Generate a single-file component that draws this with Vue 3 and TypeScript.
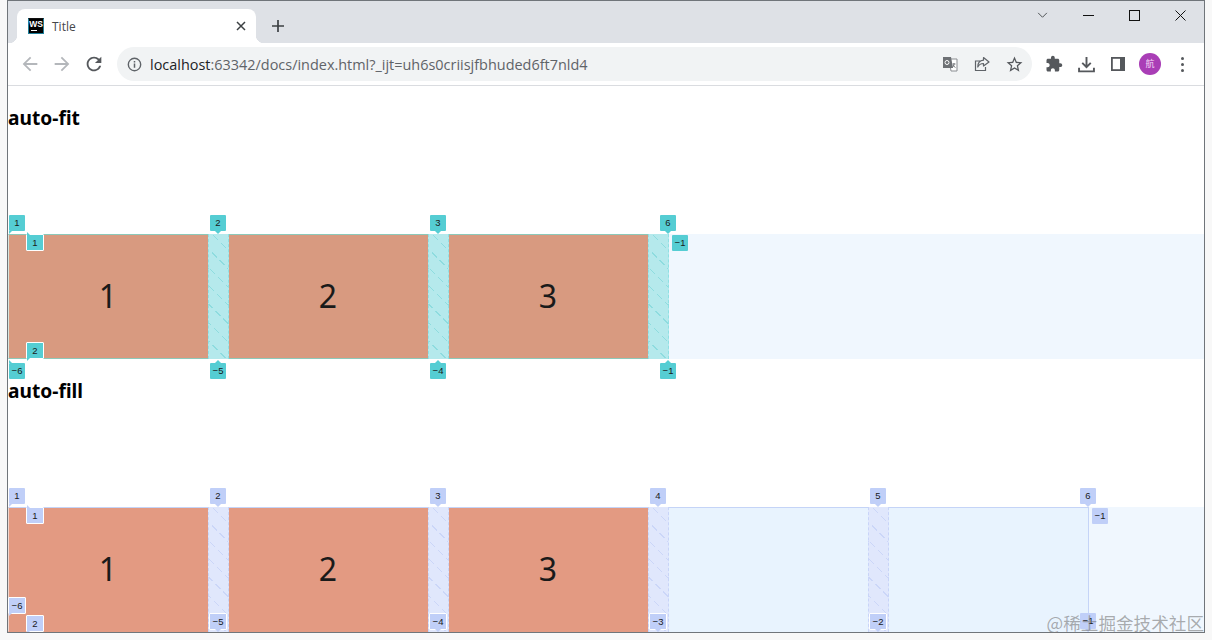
<script setup lang="ts">
interface Badge { x: number; y: number; label: string; arrow: string; ring?: boolean }
interface Section {
  title: string; kind: string; gaps: number[]; extent: number; badges: Badge[]
}

const b = (x: number, y: number, label: string, arrow: string, ring = false): Badge => ({ x, y, label, arrow, ring })

const sections: Section[] = [
  {
    title: 'auto-fit', kind: 'fit', gaps: [200, 420, 640], extent: 661,
    badges: [
      b(1, -19, '1', 'corner-bl'), b(202, -19, '2', 'down'), b(422, -19, '3', 'down'), b(652, -19, '6', 'down'),
      b(18, 0, '1', 'corner-tl', true), b(18, 108, '2', 'corner-bl', true), b(664, 1, '−1', 'none'),
      b(1, 129, '−6', 'corner-tl'), b(202, 129, '−5', 'up'), b(422, 129, '−4', 'up'), b(652, 129, '−1', 'up')
    ]
  },
  {
    title: 'auto-fill', kind: 'fill', gaps: [200, 420, 640, 860], extent: 1081,
    badges: [
      b(1, -19, '1', 'corner-bl'), b(202, -19, '2', 'down'), b(422, -19, '3', 'down'), b(642, -19, '4', 'down'),
      b(862, -19, '5', 'down'), b(1072, -19, '6', 'down'),
      b(18, 0, '1', 'corner-tl', true), b(1084, 1, '−1', 'none'),
      b(0, 90, '−6', 'corner-bl', true), b(18, 108, '2', 'corner-bl', true),
      b(201, 106, '−5', 'down', true), b(421, 106, '−4', 'down', true), b(641, 106, '−3', 'down', true),
      b(861, 106, '−2', 'down', true), b(1072, 106, '−1', 'down')
    ]
  }
]
const cells = ['1', '2', '3']
</script>

<template>
  <div class="screen">
    <div class="window">
      <header class="tabstrip">
        <div class="tab">
          <span class="favicon">WS</span>
          <span class="tab-title">Title</span>
          <svg class="tab-close" viewBox="0 0 10 10" width="10" height="10"><path d="M1 1l8 8M9 1l-8 8" stroke="#3c4043" stroke-width="1.5" fill="none" /></svg>
        </div>
        <svg class="new-tab" viewBox="0 0 12 12" width="12" height="12"><path d="M6 0v12M0 6h12" stroke="#3c4043" stroke-width="1.7" fill="none" /></svg>
        <div class="win-controls">
          <span class="win-btn"><svg viewBox="0 0 12 8" width="11" height="7"><path d="M1 1l5 5 5-5" stroke="#3c4043" stroke-width="1" fill="none" /></svg></span>
          <span class="win-btn"><svg viewBox="0 0 11 11" width="11" height="11"><path d="M0 5.5h11" stroke="#111" stroke-width="1" fill="none" /></svg></span>
          <span class="win-btn"><svg viewBox="0 0 11 11" width="11" height="11"><rect x=".5" y=".5" width="10" height="10" stroke="#111" stroke-width="1" fill="none" /></svg></span>
          <span class="win-btn"><svg viewBox="0 0 11 11" width="11" height="11"><path d="M.5.5l10 10M10.500.5l-10 10" stroke="#111" stroke-width="1" fill="none" /></svg></span>
        </div>
      </header>

      <nav class="toolbar">
        <span class="tool"><svg viewBox="0 0 24 24" width="22" height="22"><path fill="#b4b7bb" d="M20 11H7.830l5.590-5.590L12 4l-8 8 8 8 1.410-1.410L7.830 13H20v-2z" /></svg></span>
        <span class="tool"><svg viewBox="0 0 24 24" width="22" height="22"><path fill="#b4b7bb" d="M12 4l-1.410 1.410L16.170 11H4v2h12.170l-5.580 5.590L12 20l8-8z" /></svg></span>
        <span class="tool"><svg viewBox="0 0 24 24" width="22" height="22"><path fill="#55585c" d="M17.650 6.350A7.958 7.958 0 0 0 12 4c-4.420 0-7.990 3.580-7.990 8s3.570 8 7.990 8c3.730 0 6.840-2.550 7.730-6h-2.080A5.990 5.990 0 0 1 12 18c-3.310 0-6-2.690-6-6s2.690-6 6-6c1.660 0 3.140.690 4.220 1.780L13 11h7V4l-2.350 2.350z" /></svg></span>
        <div class="omnibox">
          <svg class="info" viewBox="0 0 16 16" width="15" height="15"><circle cx="8" cy="8" r="6.600" stroke="#5f6368" stroke-width="1.500" fill="none" /><path d="M7.200 7h1.600v4.500H7.200zM7.200 4.300h1.600v1.600H7.200z" fill="#5f6368" /></svg>
          <span class="url"><span class="host">localhost</span>:63342/docs/index.html?_ijt=uh6s0criisjfbhuded6ft7nld4</span>
          <span class="tool"><svg viewBox="0 0 16 16" width="16" height="16"><path d="M7 3h8v12H9z" fill="#fff" stroke="#8a8d91" stroke-width="1" /><path d="M1 1h8l2 11H1z" fill="#6d7074" /><circle cx="5" cy="6.500" r="2" fill="none" stroke="#fff" stroke-width="1" /><path d="M10.500 8h3M12 7v1c0 2-1 3-2 3.500M11 9c.5 1 1.500 2 2.500 2.500" stroke="#6d7074" stroke-width=".9" fill="none" /></svg></span>
          <span class="tool"><svg viewBox="0 0 16 16" width="16" height="16"><path d="M6 5H1.500v9.500h10V11" stroke="#5f6368" stroke-width="1.200" fill="none" /><path d="M9.500 1.500L15 6l-5.500 4V7.500C7 7.500 5 8.500 3.800 11c0-4 2.200-6.500 5.700-6.800z" stroke="#5f6368" stroke-width="1.200" fill="#f1f3f4" stroke-linejoin="round" /></svg></span>
          <span class="tool"><svg viewBox="0 0 24 24" width="19" height="19"><path fill="#55585c" d="M22 9.240l-7.190-.620L12 2 9.190 8.630 2 9.240l5.460 4.730L5.820 21 12 17.270 18.180 21l-1.630-7.030L22 9.240zM12 15.400l-3.760 2.270 1-4.280-3.320-2.880 4.380-.380L12 6.100l1.710 4.040 4.380.380-3.320 2.880 1 4.280L12 15.400z" /></svg></span>
        </div>
        <div class="actions">
          <span class="tool"><svg viewBox="0 0 24 24" width="18" height="18"><path fill="#55585c" d="M20.500 11H19V7c0-1.100-.9-2-2-2h-4V3.500C13 2.120 11.880 1 10.500 1S8 2.120 8 3.500V5H4c-1.100 0-1.990.9-1.990 2v3.800H3.500c1.490 0 2.700 1.210 2.700 2.700s-1.210 2.700-2.700 2.700H2V20c0 1.100.9 2 2 2h3.800v-1.500c0-1.490 1.210-2.700 2.700-2.700 1.490 0 2.700 1.210 2.700 2.700V22H17c1.100 0 2-.9 2-2v-4h1.500c1.380 0 2.500-1.120 2.500-2.500S21.880 11 20.500 11z" /></svg></span>
          <span class="tool"><svg viewBox="0 0 16 16" width="17" height="17"><path d="M8 1v9M4 6.500L8 10.500l4-4M1 11v3.500h14V11" stroke="#55585c" stroke-width="1.800" fill="none" /></svg></span>
          <span class="tool"><svg viewBox="0 0 14 14" width="14" height="14"><rect x=".9" y=".9" width="12.200" height="12.200" fill="#fff" stroke="#55585c" stroke-width="1.800" /><rect x="9" y="1" width="4" height="12" fill="#55585c" /></svg></span>
          <span class="tool"><span class="avatar">航</span></span>
          <span class="tool"><span class="dots"><i></i><i></i><i></i></span></span>
        </div>
      </nav>

      <main class="page">
        <section v-for="s in sections" :key="s.title" class="section">
          <h3 class="heading">{{ s.title }}</h3>
          <div class="grid" :class="s.kind">
            <div class="extent" :style="{ width: s.extent + 'px' }"></div>
            <div v-for="c in cells" :key="c" class="cell">{{ c }}</div>
            <div class="outline" :style="{ width: s.extent + 'px' }"></div>
            <div v-for="g in s.gaps" :key="g" class="gap" :style="{ left: g + 'px' }"></div>
            <span
              v-for="(t, i) in s.badges"
              :key="i"
              class="badge"
              :class="[t.arrow, { ring: t.ring }]"
              :style="{ left: t.x + 'px', top: t.y + 'px' }"
            >{{ t.label }}</span>
          </div>
        </section>
      </main>
    </div>
    <div class="watermark">@稀土掘金技术社区</div>
  </div>
</template>

<style>
html, body { margin: 0; background: #fafafa; }
</style>

<style scoped>
.screen {
  position: relative;
  width: 1212px;
  height: 640px;
  overflow: hidden;
  background: #f8f8f8;
  font-family: "Open Sans", "Noto Sans", sans-serif;
}
.window {
  box-sizing: border-box;
  width: 1198px;
  height: 633px;
  margin-left: 7px;
  border: 1px solid #70757a;
  background: #fff;
  overflow: hidden;
}
.tabstrip {
  display: flex;
  align-items: flex-end;
  height: 42px;
  background: #dee1e6;
}
.tab {
  position: relative;
  display: flex;
  align-items: center;
  box-sizing: border-box;
  width: 239px;
  height: 34px;
  margin-left: 9px;
  padding: 0 11px;
  background: #fff;
  border-radius: 8px 8px 0 0;
}
.tab::before,
.tab::after {
  content: "";
  position: absolute;
  bottom: 0;
  width: 8px;
  height: 8px;
}
.tab::before {
  left: -8px;
  background: radial-gradient(circle at 0 0, transparent 8px, #fff 8.500px);
}
.tab::after {
  right: -8px;
  background: radial-gradient(circle at 100% 0, transparent 8px, #fff 8.500px);
}
.favicon {
  position: relative;
  box-sizing: border-box;
  width: 16px;
  height: 16px;
  background: #000;
  color: #fff;
  font: 700 8.500px/10px "Liberation Sans", sans-serif;
  text-align: center;
  border: 1px solid #1f7f9a;
  border-top-color: #111;
  flex: none;
}
.favicon::after {
  content: "";
  position: absolute;
  left: 2px;
  bottom: 2px;
  width: 6px;
  height: 1px;
  background: #fff;
}
.tab-title {
  flex: 1;
  margin-left: 8px;
  font-size: 12px;
  color: #45474a;
}
.tab-close { margin-right: -1px; }
.new-tab {
  align-self: center;
  margin: 8px 0 0 16px;
}
.win-controls {
  display: flex;
  align-self: flex-start;
  margin-left: auto;
  margin-right: 1px;
}
.win-btn {
  display: flex;
  align-items: center;
  justify-content: center;
  width: 46px;
  height: 29px;
}
.toolbar {
  display: flex;
  align-items: center;
  box-sizing: border-box;
  height: 43px;
  padding-left: 6px;
  background: #fff;
  border-bottom: 1px solid #dadce0;
}
.tool {
  display: flex;
  align-items: center;
  justify-content: center;
  flex: none;
  width: 32px;
  height: 34px;
}
.omnibox {
  display: flex;
  align-items: center;
  box-sizing: border-box;
  width: 915px;
  height: 34px;
  margin-left: 7px;
  padding: 0 2px 0 10px;
  border-radius: 17px;
  background: #f1f3f4;
}
.info { flex: none; }
.url {
  flex: 1;
  margin-left: 8px;
  font-size: 14.450px;
  color: #5f6368;
  white-space: nowrap;
}
.host { color: #202124; }
.actions {
  display: flex;
  margin-left: 6px;
}
.avatar {
  width: 22px;
  height: 22px;
  border-radius: 50%;
  background: #a93eb6;
  color: #f5d9f5;
  font: 9px/22px "Noto Sans CJK SC", sans-serif;
  text-align: center;
}
.dots {
  display: flex;
  flex-direction: column;
  gap: 3px;
}
.dots i {
  display: block;
  width: 3px;
  height: 3px;
  border-radius: 50%;
  background: #55585c;
}
.page { background: #fff; }
.section { padding-top: 21px; }
.heading {
  margin: 0 0 102px;
  height: 25px;
  font: 700 19.200px/21px "Noto Sans", "Open Sans", sans-serif;
  color: #000;
}
.grid {
  position: relative;
  display: grid;
  grid-template-columns: repeat(auto-fill, 200px);
  column-gap: 20px;
  height: 125px;
  background: #f0f7fe;
}
.extent {
  position: absolute;
  left: 0;
  top: 0;
  height: 125px;
}
.cell {
  position: relative;
  z-index: 1;
  display: flex;
  align-items: center;
  justify-content: center;
  padding-bottom: 2px;
  box-sizing: border-box;
  font: 400 32px "Noto Sans", "Open Sans", sans-serif;
  color: #1a1a1a;
}
.fit .cell { background: #d89a80; }
.fill .cell { background: #e39a82; }
.fill .extent { background: #e8f3fe; }
.outline {
  position: absolute;
  z-index: 2;
  left: 0;
  top: 0;
  box-sizing: border-box;
  height: 125px;
  border: 1px solid #6fd2ce;
  border-left-color: #d8e6de;
}
.fit .outline { border-top-color: #8cc9ba; border-bottom-color: #8cc9ba; }
.fill .outline { border: 1px solid #c5d4f7; border-left-color: #f0d8d0; border-bottom-color: transparent; }
.gap {
  position: absolute;
  z-index: 2;
  top: 0;
  box-sizing: border-box;
  width: 21px;
  height: 125px;
}
.fit .gap {
  border-left: 1px dashed #8fe0e3;
  border-right: 1px dashed #8fe0e3;
  background:
    repeating-linear-gradient(135deg, #b5e9ec 0 4px, transparent 4px 11px),
    repeating-linear-gradient(45deg, #b5e9ec 0 12px, #8edcdf 12px 13px);
}
.fill .gap {
  border-left: 1px dashed #c8d4f8;
  border-right: 1px dashed #c8d4f8;
  background:
    repeating-linear-gradient(135deg, #e0e7fc 0 4px, transparent 4px 11px),
    repeating-linear-gradient(45deg, #e0e7fc 0 12px, #cbd6f8 12px 13px);
}
.badge {
  position: absolute;
  z-index: 3;
  box-sizing: border-box;
  width: 16px;
  height: 16px;
  border-radius: 1px;
  font: 9.500px/16px "Liberation Sans", sans-serif;
  color: #1a1a1a;
  text-align: center;
}
.fit .badge { background: #55cdd3; }
.fill .badge { background: #c0cff8; }
.badge.ring {
  width: 18px;
  height: 17px;
  line-height: 15px;
  border: 1px solid #fff;
}
.badge::after {
  content: "";
  position: absolute;
  width: 0;
  height: 0;
  border: 3px solid transparent;
}
.badge.none::after { display: none; }
.fit .badge.down::after { border-top-color: #55cdd3; }
.fit .badge.up::after { border-bottom-color: #55cdd3; }
.fill .badge.down::after { border-top-color: #c0cff8; }
.fill .badge.up::after { border-bottom-color: #c0cff8; }
.badge.down::after { left: 50%; margin-left: -3px; top: 100%; }
.badge.up::after { left: 50%; margin-left: -3px; bottom: 100%; }
.badge.corner-bl::after {
  left: 0; top: 100%;
  border-width: 3px 3px 0 0;
}
.badge.corner-tl::after {
  left: 0; bottom: 100%;
  border-width: 0 3px 3px 0;
}
.fit .badge.corner-bl::after { border-top-color: #55cdd3; }
.fill .badge.corner-bl::after { border-top-color: #c0cff8; }
.fit .badge.corner-tl::after { border-bottom-color: #55cdd3; }
.fill .badge.corner-tl::after { border-bottom-color: #c0cff8; }
.watermark {
  position: absolute;
  z-index: 5;
  right: 8px;
  bottom: 6px;
  font: 17.600px/22px "Noto Sans CJK SC", sans-serif;
  color: rgba(120, 120, 120, 0.6);
}
</style>
